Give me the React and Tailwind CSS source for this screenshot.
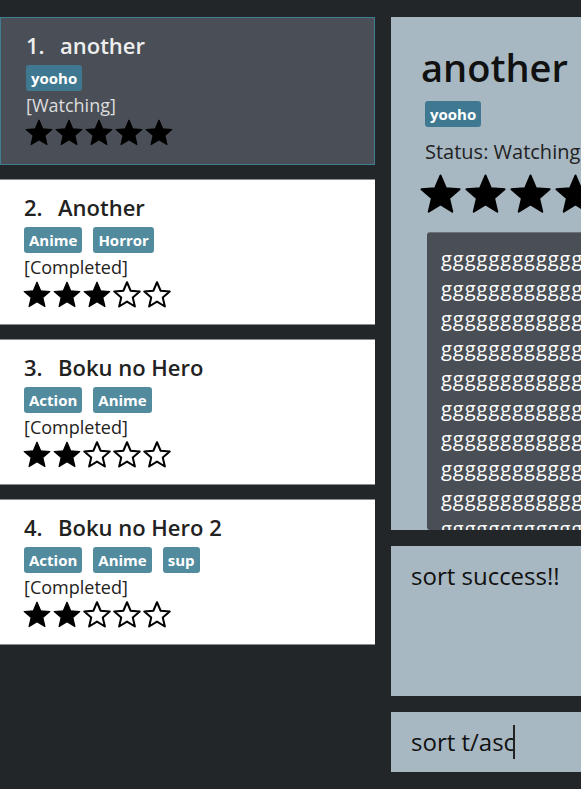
import React from 'react';

const shows = [
  { title: 'another', tags: ['yooho'], status: 'Watching', rating: 5, selected: true },
  { title: 'Another', tags: ['Anime', 'Horror'], status: 'Completed', rating: 3 },
  { title: 'Boku no Hero', tags: ['Action', 'Anime'], status: 'Completed', rating: 2 },
  { title: 'Boku no Hero 2', tags: ['Action', 'Anime', 'sup'], status: 'Completed', rating: 2 },
];

const font = { fontFamily: '"Open Sans", "Noto Sans", sans-serif' };

function Star({ filled, size }) {
  return (
    <svg width={size} height={size} viewBox="0 0 24 24">
      <polygon
        points="12,1.8 14.9,8.6 22.2,9.2 16.6,14 18.3,21.2 12,17.3 5.7,21.2 7.4,14 1.8,9.2 9.1,8.6"
        fill={filled ? '#000' : 'none'}
        stroke="#000"
        strokeWidth={filled ? 1 : 1.6}
        strokeLinejoin="round"
      />
    </svg>
  );
}

function Stars({ rating, size, className }) {
  return (
    <div className={`flex ${className}`}>
      {[1, 2, 3, 4, 5].map((n) => (
        <Star key={n} filled={n <= rating} size={size} />
      ))}
    </div>
  );
}

function Tag({ label, dark }) {
  return (
    <span
      className={`rounded-[3px] px-[5px] text-[15px] font-bold leading-[26px] text-white ${
        dark ? 'bg-[#3f7891]' : 'bg-[#528a9e]'
      }`}
    >
      {label}
    </span>
  );
}

function ShowCard({ show, index }) {
  const sel = show.selected;
  return (
    <div
      className={`flex flex-col px-6 ${
        sel
          ? 'h-[148px] border border-[#3f7d92] bg-[#4a4f57] pt-[12px] pl-[25px] text-[#eeeeee]'
          : 'h-[146px] border-y border-[#8a8d90] bg-white pt-[12px] text-[#222222]'
      }`}
    >
      <div className="flex text-[22px] font-semibold leading-[30px]">
        <span className="w-[34px]">{index + 1}.</span>
        <span>{show.title}</span>
      </div>
      <div className="mt-[5px] flex gap-[11px]">
        {show.tags.map((t) => (
          <Tag key={t} label={t} dark={sel} />
        ))}
      </div>
      <div className={`text-[18px] leading-[28px] ${sel ? 'text-[#dddddd]' : 'text-[#222222]'}`}>
        [{show.status}]
      </div>
      <Stars rating={show.rating} size={30} className="-ml-[2px] -mt-[1px]" />
    </div>
  );
}

export default function App() {
  const selected = shows[0];
  return (
    <div className="flex h-[789px] w-[581px] gap-4 overflow-hidden bg-[#232629]" style={font}>
      <div className="flex w-[375px] shrink-0 flex-col gap-[14px] pt-[17px]">
        {shows.map((s, i) => (
          <ShowCard key={i} show={s} index={i} />
        ))}
      </div>

      <div className="flex w-[420px] shrink-0 flex-col gap-4 py-[17px]">
        {/* Detail panel */}
        <div className="flex h-[513px] flex-col overflow-hidden bg-[#a8b8c2] pl-[30px] pt-[22px]">
          <div className="text-[38px] font-semibold leading-[56px] text-[#111111]">{selected.title}</div>
          <div className="ml-[4px] mt-[6px] flex">
            <Tag label="yooho" dark />
          </div>
          <div className="ml-[4px] mt-[10px] text-[20px] leading-[30px] text-[#222222]">
            Status: Watching
          </div>
          <Stars rating={5} size={45} className="mt-[5px] -ml-[3px]" />
          <div className="ml-[6px] mt-[15px] flex-1 overflow-hidden rounded-[3px] border-t border-[#6d7278] bg-[#4a4f56] px-[14px] pt-[11px] text-[20px] leading-[30px] tracking-[1px] text-white">
            {Array.from({ length: 10 }).map((_, i) => (
              <div key={i}>gggggggggggg</div>
            ))}
          </div>
        </div>

        {/* Result box */}
        <div className="h-[150px] bg-[#a8b8c2] px-5 pt-[12px] text-[24px] leading-[36px] text-[#111111]">
          sort success!!
        </div>

        {/* Command box */}
        <div className="flex h-[60px] items-center bg-[#a8b8c2] px-5 text-[24px] text-[#111111]">
          <span>sort t/asc</span>
          <span className="-ml-[2px] h-[34px] w-[2px] bg-[#222222]" />
        </div>
      </div>
    </div>
  );
}
